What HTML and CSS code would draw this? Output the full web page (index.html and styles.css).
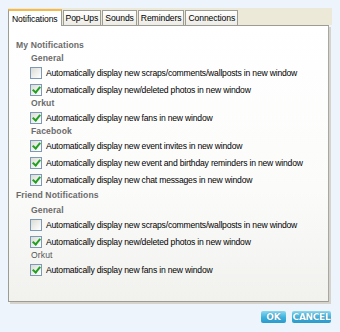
FILE: index.html
```html
<!DOCTYPE html>
<html>
<head>
<meta charset="utf-8">
<link rel="stylesheet" href="styles.css">
</head>
<body>
<div class="window">
  <div class="tabs">
    <div class="tab active">Notifications</div>
    <div class="tab">Pop-Ups</div>
    <div class="tab">Sounds</div>
    <div class="tab">Reminders</div>
    <div class="tab">Connections</div>
  </div>
  <div class="panel">
    <div class="h1">My Notifications</div>
    <div class="h2">General</div>
    <label class="opt"><span class="cb"></span>Automatically display new scraps/comments/wallposts in new window</label>
    <label class="opt"><span class="cb on"></span>Automatically display new/deleted photos in new window</label>
    <div class="h2">Orkut</div>
    <label class="opt"><span class="cb on"></span>Automatically display new fans in new window</label>
    <div class="h2">Facebook</div>
    <label class="opt"><span class="cb on"></span>Automatically display new event invites in new window</label>
    <label class="opt"><span class="cb on"></span>Automatically display new event and birthday reminders in new window</label>
    <label class="opt"><span class="cb on"></span>Automatically display new chat messages in new window</label>
    <div class="h1 second">Friend Notifications</div>
    <div class="h2">General</div>
    <label class="opt"><span class="cb"></span>Automatically display new scraps/comments/wallposts in new window</label>
    <label class="opt"><span class="cb on"></span>Automatically display new/deleted photos in new window</label>
    <div class="h2 plain">Orkut</div>
    <label class="opt"><span class="cb on"></span>Automatically display new fans in new window</label>
  </div>
  <div class="buttons">
    <div class="btn ok">OK</div>
    <div class="btn cancel">CANCEL</div>
  </div>
</div>
</body>
</html>
```
FILE: styles.css
```css
html, body { margin: 0; padding: 0; }
body {
  width: 340px; height: 332px;
  background: #eef4fb;
  font-family: "Liberation Sans", Arial, sans-serif;
  font-size: 9px;
  color: #000;
  overflow: hidden;
}
.window { padding: 8px 11px 0 8px; }
.tabs {
  display: flex;
  align-items: flex-end;
  height: 17px;
  background: #ece9d8;
  margin-right: -3px;
}
.tab {
  height: 14px;
  line-height: 14px;
  padding: 0 2px;
  margin-right: 1px;
  border: 1px solid #9c9c94;
  border-bottom: none;
  background: linear-gradient(#ffffff, #ecebe5);
  font-size: 8.6px;
  color: #000;
  letter-spacing: -0.1px;
}
.tab.active {
  height: 17px;
  line-height: 17px;
  border-top: 2px solid #f3b94c;
  border-color: #f3b94c #9c9c94 #fff #9c9c94;
  background: #fff;
  padding: 0 3px;
  margin-bottom: -1px;
  box-sizing: border-box;
}
.panel {
  height: 277px;
  box-sizing: border-box;
  border: 1px solid #9c9c94;
  border-right-color: #a8a8a0;
  background: linear-gradient(#ffffff 0%, #fbfbfa 60%, #f1f1ee 100%);
  box-shadow: 2px 2px 0 #d5d3cc;
  padding: 12px 0 0 7px;
  font-size: 8.6px;
  letter-spacing: -0.2px;
}
.h1 {
  font-weight: bold;
  color: #6b6b6b;
  height: 15px;
  line-height: 15px;
  letter-spacing: 0.1px;
}
.h1.second { margin-bottom: 2px; }
.h2 {
  font-weight: bold;
  color: #6b6b6b;
  padding-left: 15px;
  height: 11px;
  line-height: 11px;
  letter-spacing: 0.1px;
}
.h2.plain { font-weight: normal; color: #555; }
.opt {
  display: flex;
  align-items: center;
  padding-left: 14px;
  height: 17px;
  white-space: nowrap;
}
.cb {
  width: 10px; height: 10px;
  border: 1px solid #7d99b6;
  background: linear-gradient(135deg, #dcdcd5, #ffffff);
  margin-right: 4px;
  flex: none;
  position: relative;
}
.cb.on::after {
  content: "";
  position: absolute;
  left: 3px; top: 0px;
  width: 3px; height: 6px;
  border: solid #21a121;
  border-width: 0 2px 2px 0;
  transform: rotate(40deg);
}
.buttons {
  display: flex;
  justify-content: flex-end;
  gap: 6px;
  margin-top: 9px;
  margin-right: -2px;
}
.btn {
  height: 12px;
  line-height: 12px;
  border-radius: 2px;
  background: linear-gradient(#8ad9f0, #3cb0dd 55%, #2a9bcb);
  color: #fff;
  font-family: "DejaVu Sans", sans-serif;
  font-weight: bold;
  font-size: 9px;
  text-align: center;
  text-shadow: 0 0 1px #1b6b94;
}
.btn.ok { width: 25px; }
.btn.cancel { width: 39px; letter-spacing: -0.3px; }
```
